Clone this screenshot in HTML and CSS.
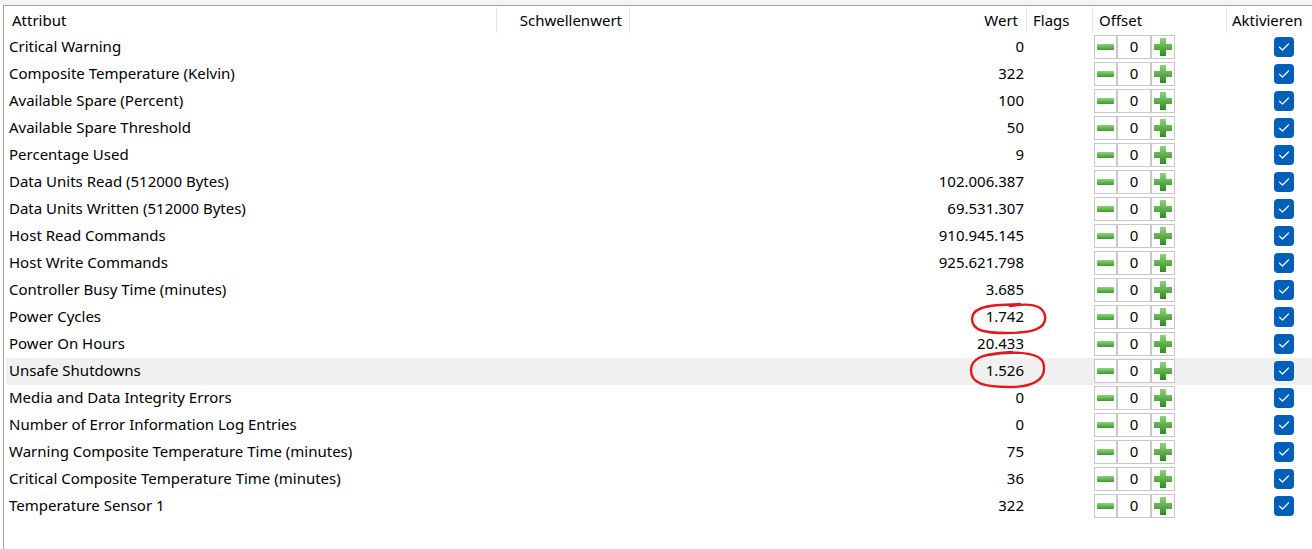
FILE: index.html
```html
<!DOCTYPE html>
<html lang="de">
<head>
<meta charset="utf-8">
<title>SMART Attribute</title>
<link rel="stylesheet" href="styles.css">
</head>
<body>
<div class="topstrip"></div>
<div class="panel">
  <div class="row header">
    <div class="c-attr">Attribut</div>
    <div class="c-thr">Schwellenwert</div>
    <div class="c-val">Wert</div>
    <div class="c-flags">Flags</div>
    <div class="c-off">Offset</div>
    <div class="c-act">Aktivieren</div>
  </div>
  <div id="rows"></div>
  <svg class="marks" width="1312" height="549" viewBox="0 0 1312 549">
    <path d="M1010 306 C1028 303 1043 304 1045 316 C1047 329 1032 333 1006 333 C986 333 972 331 972 319 C972 309 984 306 1000 305 L1020 304" />
    <path d="M988 355 C1005 352 1037 350 1043 362 C1047 375 1040 387 1010 387 C985 387 970 384 971 369 C972 359 981 355 1000 353 L1012 352" />
  </svg>
</div>
<script src="app.js"></script>
</body>
</html>
```

FILE: styles.css
```css
html, body {
  margin: 0;
  padding: 0;
  background: #ffffff;
  font-family: "Noto Sans", "Open Sans", "Liberation Sans", sans-serif;
  font-size: 15px;
  color: #000000;
  overflow: hidden;
}
.topstrip {
  height: 5px;
  background: #f3f3f3;
}
.panel {
  position: relative;
  margin-left: 3px;
  border-top: 1px solid #a0a0a0;
  border-left: 1px solid #a0a0a0;
  height: 543px;
  background: #ffffff;
}
.row {
  display: grid;
  grid-template-columns: 491px 133px 397px 66px 134px 1fr;
  height: 27px;
  line-height: 24px;
  margin-left: 2px;
  align-items: start;
}
.row.header {
  height: 28px;
  margin-left: 0;
  grid-template-columns: 493px 133px 397px 66px 134px 1fr;
}
.row.header > div {
  height: 26px;
  margin-top: 1px;
  line-height: 27px;
  display: flex;
  align-items: flex-start;
  border-right: 1px solid #e5e5e5;
  box-sizing: border-box;
}
.row.header > .c-attr {
  border-right: 1px solid #e5e5e5;
  padding-left: 8px;
}
.row.header > .c-thr { justify-content: flex-end; padding-right: 7px; }
.row.header > .c-val { justify-content: flex-end; padding-right: 8px; }
.row.header > .c-flags { padding-left: 6px; }
.row.header > .c-off { padding-left: 6px; }
.row.header > .c-act { padding-left: 5px; border-right: none; }

.row.sel { background: #f0f0f0; }
.cell-attr { padding-left: 3px; white-space: nowrap; }
.cell-val { grid-column: 3; text-align: right; padding-right: 3px; }
.cell-off {
  grid-column: 5;
  display: flex;
  margin-top: 1px;
  padding-left: 1px;
}
.box {
  height: 24px;
  box-sizing: border-box;
  border: 1px solid #c8c8c8;
  background: #ffffff;
  display: flex;
  align-items: center;
  justify-content: center;
  line-height: 21px;
}
.box.num { align-items: flex-start; }
.box.minus { width: 23px; }
.box.num { width: 34px; }
.box.plus { width: 24px; }
.cell-act {
  grid-column: 6;
  padding-left: 47px;
  padding-top: 3px;
  display: flex;
}
.check {
  width: 20px;
  height: 20px;
  border-radius: 4px;
  background: #005fb8;
  display: flex;
  align-items: center;
  justify-content: center;
}
.marks {
  position: absolute;
  left: -4px;
  top: -6px;
  pointer-events: none;
}
.marks path {
  fill: none;
  stroke: #e0191e;
  stroke-width: 2.4;
  stroke-linecap: round;
}
```

FILE: app.js
```js
const data = [
  ["Critical Warning", "0"],
  ["Composite Temperature (Kelvin)", "322"],
  ["Available Spare (Percent)", "100"],
  ["Available Spare Threshold", "50"],
  ["Percentage Used", "9"],
  ["Data Units Read (512000 Bytes)", "102.006.387"],
  ["Data Units Written (512000 Bytes)", "69.531.307"],
  ["Host Read Commands", "910.945.145"],
  ["Host Write Commands", "925.621.798"],
  ["Controller Busy Time (minutes)", "3.685"],
  ["Power Cycles", "1.742"],
  ["Power On Hours", "20.433"],
  ["Unsafe Shutdowns", "1.526"],
  ["Media and Data Integrity Errors", "0"],
  ["Number of Error Information Log Entries", "0"],
  ["Warning Composite Temperature Time (minutes)", "75"],
  ["Critical Composite Temperature Time (minutes)", "36"],
  ["Temperature Sensor 1", "322"]
];
const minusSvg = '<svg width="17" height="6" viewBox="0 0 17 6"><defs><linearGradient id="gm" x1="0" y1="0" x2="0" y2="1"><stop offset="0" stop-color="#8fd47a"/><stop offset="1" stop-color="#3c9a2a"/></linearGradient></defs><rect x="0" y="0" width="17" height="6" rx="1" fill="url(#gm)"/></svg>';
const plusSvg = '<svg width="18" height="18" viewBox="0 0 18 18"><defs><linearGradient id="gp" x1="0" y1="0" x2="0" y2="1"><stop offset="0" stop-color="#8fd47a"/><stop offset="1" stop-color="#2e8a1e"/></linearGradient></defs><path d="M6 0h6v6h6v6h-6v6h-6v-6h-6v-6h6z" fill="url(#gp)"/></svg>';
const checkSvg = '<svg width="12" height="10" viewBox="0 0 12 10"><path d="M1.5 5.2 L4.5 8 L10.5 2" fill="none" stroke="#ffffff" stroke-width="1.2" stroke-linecap="round" stroke-linejoin="round"/></svg>';
const host = document.getElementById("rows");
data.forEach(([name, val], i) => {
  const row = document.createElement("div");
  row.className = "row" + (i === 12 ? " sel" : "");
  row.innerHTML =
    '<div class="cell-attr">' + name + '</div>' +
    '<div class="cell-val">' + val + '</div>' +
    '<div class="cell-off"><div class="box minus">' + minusSvg + '</div><div class="box num">0</div><div class="box plus">' + plusSvg + '</div></div>' +
    '<div class="cell-act"><div class="check">' + checkSvg + '</div></div>';
  host.appendChild(row);
});
```
